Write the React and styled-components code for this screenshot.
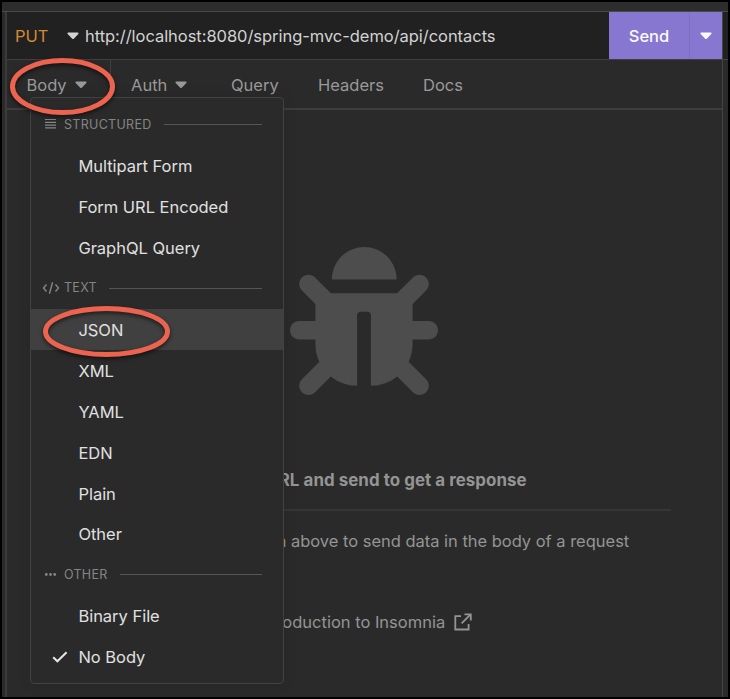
import React from "react";
import styled, { createGlobalStyle } from "styled-components";
import { FaBug } from "react-icons/fa";

const GlobalStyle = createGlobalStyle`
  * { box-sizing: border-box; }
  body { margin: 0; background: #000; font-family: Inter, "Liberation Sans", sans-serif; }
  button { font: inherit; color: inherit; background: none; border: 0; padding: 0; margin: 0; }
`;

const Window = styled.div`
  position: relative;
  width: 730px;
  height: 699px;
  border: 2px solid #000;
  background: #2a2a2a;
  display: flex;
  flex-direction: column;
  overflow: hidden;
  font-size: 16.5px;
`;

const TopStrip = styled.div`
  height: 10px;
  flex: none;
  background: #2d2d2d;
  border-bottom: 1px solid #4a4a4a;
`;

const Main = styled.div`
  flex: 1;
  display: flex;
  min-height: 0;
`;

const LeftGutter = styled.div`
  width: 5px;
  flex: none;
  border-right: 2px solid #3b3b3b;
`;

const RightGutter = styled.div`
  width: 6px;
  flex: none;
  border-left: 1px solid #444;
  background: linear-gradient(#212121 0 47px, #444 47px 48px, #2a2a2a 48px);
`;

const Pane = styled.main`
  flex: 1;
  min-width: 0;
  display: flex;
  flex-direction: column;
`;

const UrlBar = styled.div`
  height: 48px;
  flex: none;
  display: flex;
  background: #212121;
  border-bottom: 1px solid #3f3f3f;
`;

const Method = styled.button`
  width: 78px;
  padding: 0 6.5px 0 8px;
  display: flex;
  align-items: center;
  justify-content: space-between;
  color: #d68a2e;
`;

const Url = styled.div`
  flex: 1;
  display: flex;
  align-items: center;
  color: #d3d3d3;
  letter-spacing: -0.045px;
`;

const SendGroup = styled.div`
  display: flex;
  width: 113px;
  background: #8777d0;
  color: #fafafa;
`;

const SendButton = styled.button`
  width: 81px;
  border-right: 1px solid #7d70b8;
  font-weight: 500;
`;

const SendMenu = styled.button`
  flex: 1;
  display: flex;
  align-items: center;
  justify-content: center;
  padding-top: 1px;
`;

const Caret = styled.svg`
  width: 12px;
  height: 8px;
  flex: none;
  fill: ${(p) => p.$color || "currentColor"};
`;

const Tabs = styled.nav`
  height: 50px;
  flex: none;
  display: flex;
  border-bottom: 2px solid #3d3d3d;
  color: #999;
`;

const Tab = styled.button`
  display: flex;
  align-items: center;
  gap: 8px;
  width: ${(p) => p.$width}px;
  padding-left: 20px;
  padding-top: 2px;
  ${(p) => p.$active && "border-right: 1px solid #414141; padding-left: 19.5px;"}
`;

const EmptyState = styled.section`
  flex: 1;
  display: flex;
  flex-direction: column;
  align-items: center;
  padding-top: 137px;
  color: #949494;
`;

const BugIcon = styled(FaBug)`
  width: 148px;
  height: 148px;
  flex: none;
  margin-right: 0.5px;
  color: #4d4d4d;
`;

const Headline = styled.h2`
  margin: 75px 0 0;
  font-size: 16.9px;
  font-weight: 700;
  line-height: 20px;
  letter-spacing: 0.05px;
  padding-left: 2px;
  white-space: nowrap;
`;

const Divider = styled.hr`
  width: 613px;
  height: 2px;
  margin: 19px 0 0;
  border: 0;
  background: #363636;
`;

const Hint = styled.p`
  margin: 20px 0 0;
  line-height: 20px;
  letter-spacing: -0.02px;
  white-space: nowrap;
`;

const IntroLink = styled.a`
  margin-top: 61px;
  display: flex;
  align-items: center;
  gap: 9px;
  line-height: 20px;
  white-space: nowrap;
`;

const Menu = styled.div`
  position: absolute;
  left: 28px;
  top: 95px;
  width: 254px;
  height: 587px;
  padding-top: 6px;
  background: #2a2a2a;
  border: 1px solid #424242;
  border-radius: 4px;
  box-shadow: 0 0 14px rgba(0, 0, 0, 0.1);
`;

const Section = styled.div`
  height: 41px;
  display: flex;
  align-items: center;
  padding: 0 21px 0 11px;
  color: #858585;
  font-size: 12.5px;
  letter-spacing: 0.3px;
  line-height: 14px;
  text-transform: uppercase;

  &::after {
    content: "";
    flex: 1;
    height: 1px;
    margin-left: 12px;
    background: #555;
  }
`;

const SectionIcon = styled.svg`
  width: 18px;
  height: 14px;
  margin-right: 4px;
  fill: none;
  stroke: currentColor;
`;

const Item = styled.div`
  height: 40.93px;
  padding-top: 1.3px;
  display: flex;
  align-items: center;
  color: #e0e0e0;
  letter-spacing: -0.02px;
  background: ${(p) => (p.$active ? "#404040" : "transparent")};
`;

const ItemIcon = styled.span`
  width: 47.4px;
  padding: 0 0 1px 21px;
  flex: none;
  display: flex;
`;

const Ring = styled.svg`
  position: absolute;
  left: ${(p) => p.$left}px;
  top: ${(p) => p.$top}px;
  overflow: visible;
  fill: none;
  stroke: #ec6350;
  stroke-width: 5;
  filter: drop-shadow(0 2px 2px rgba(0, 0, 0, 0.6));
  pointer-events: none;
`;

function CaretDown({ color }) {
  return (
    <Caret viewBox="0 0 12 8" $color={color}>
      <path d="M1.2.6h9.6c.7 0 1 .8.5 1.3L6.8 6.7c-.5.5-1.1.5-1.6 0L.7 1.9C.2 1.4.5.6 1.2.6z" />
    </Caret>
  );
}

const sections = [
  {
    label: "Structured",
    icon: <path d="M3 1.5h11M3 4.3h11M3 7.1h11M3 9.9h11" strokeWidth="1.2" />,
    items: ["Multipart Form", "Form URL Encoded", "GraphQL Query"],
  },
  {
    label: "Text",
    icon: <path d="M4.5 3.5 1.5 7l3 3.5M13.5 3.5l3 3.5-3 3.5M10.6 1.2 7.4 12.8" strokeWidth="1.4" />,
    items: ["JSON", "XML", "YAML", "EDN", "Plain", "Other"],
  },
  {
    label: "Other",
    icon: (
      <g fill="currentColor" stroke="none">
        <circle cx="4.3" cy="6.5" r="1.4" />
        <circle cx="8.5" cy="6.5" r="1.4" />
        <circle cx="12.7" cy="6.5" r="1.4" />
      </g>
    ),
    items: ["Binary File", "No Body"],
  },
];

function BodyMenu({ highlighted, checked }) {
  return (
    <Menu>
      {sections.map((section) => (
        <React.Fragment key={section.label}>
          <Section>
            <SectionIcon viewBox="0 0 18 14">{section.icon}</SectionIcon>
            {section.label}
          </Section>
          {section.items.map((item) => (
            <Item key={item} $active={item === highlighted}>
              <ItemIcon>
                {item === checked && (
                  <svg width="16" height="12" viewBox="0 0 16 12" fill="none" stroke="#e6e6e6" strokeWidth="2">
                    <path d="M1.2 6.2 5.4 10.3 14.6 1.2" />
                  </svg>
                )}
              </ItemIcon>
              {item}
            </Item>
          ))}
        </React.Fragment>
      ))}
    </Menu>
  );
}

export default function App() {
  return (
    <>
      <GlobalStyle />
      <Window>
        <TopStrip />
        <Main>
          <LeftGutter />
          <Pane>
            <UrlBar>
              <Method>
                PUT
                <CaretDown color="#d3d3d3" />
              </Method>
              <Url>http://localhost:8080/spring-mvc-demo/api/contacts</Url>
              <SendGroup>
                <SendButton>Send</SendButton>
                <SendMenu>
                  <CaretDown />
                </SendMenu>
              </SendGroup>
            </UrlBar>
            <Tabs>
              <Tab $width={104} $active>
                Body <CaretDown />
              </Tab>
              <Tab $width={100}>
                Auth <CaretDown />
              </Tab>
              <Tab $width={87}>Query</Tab>
              <Tab $width={105}>Headers</Tab>
              <Tab $width={80}>Docs</Tab>
            </Tabs>
            <EmptyState>
              <BugIcon />
              <Headline>Enter a URL and send to get a response</Headline>
              <Divider />
              <Hint>Select a body type from above to send data in the body of a request</Hint>
              <IntroLink>
                Introduction to Insomnia
                <svg width="18" height="18" viewBox="0 0 18 18" fill="none" stroke="currentColor" strokeWidth="1.8">
                  <path d="M7 3.2H1.3v13.3h13.3V11M10.5 1.3h6.3v6.3M16.6 1.4 7.6 10.4" />
                </svg>
              </IntroLink>
            </EmptyState>
          </Pane>
          <RightGutter />
        </Main>
        <BodyMenu highlighted="JSON" checked="No Body" />
        <Ring $left={8} $top={56} width="105" height="57">
          <ellipse cx="52.5" cy="28.5" rx="50" ry="26" />
        </Ring>
        <Ring $left={41} $top={304} width="127" height="51">
          <ellipse cx="63.5" cy="25.5" rx="61" ry="23" />
        </Ring>
      </Window>
    </>
  );
}
